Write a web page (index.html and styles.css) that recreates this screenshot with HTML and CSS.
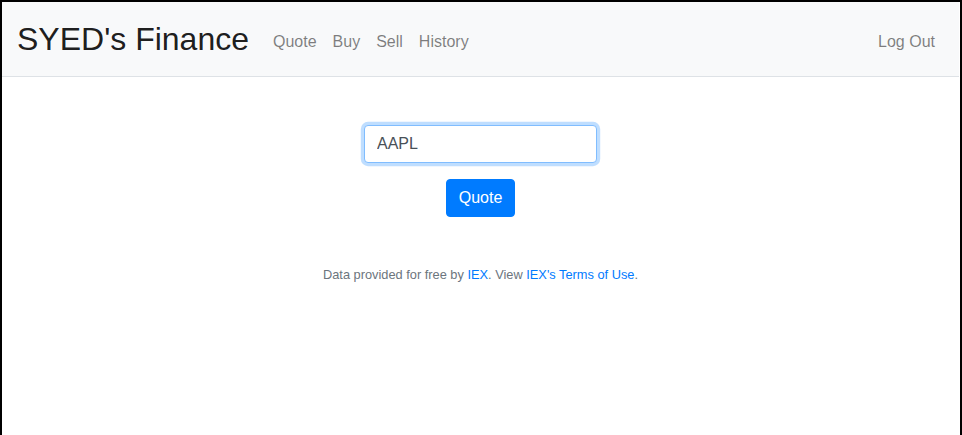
FILE: index.html
```html
<!DOCTYPE html>
<html lang="en">
<head>
<meta charset="utf-8">
<title>SYED's Finance: Quote</title>
<link rel="stylesheet" href="styles.css">
</head>
<body>
<div class="frame">
  <nav class="navbar">
    <a class="brand" href="#">SYED's Finance</a>
    <ul class="nav">
      <li><a class="nav-link" href="#">Quote</a></li>
      <li><a class="nav-link" href="#">Buy</a></li>
      <li><a class="nav-link" href="#">Sell</a></li>
      <li><a class="nav-link" href="#">History</a></li>
    </ul>
    <ul class="nav nav-right">
      <li><a class="nav-link" href="#">Log Out</a></li>
    </ul>
  </nav>
  <main class="main">
    <form class="quote-form">
      <div class="form-group">
        <input class="form-control" type="text" name="symbol" placeholder="Symbol" value="AAPL" autocomplete="off">
      </div>
      <button class="btn" type="button">Quote</button>
    </form>
  </main>
  <footer class="footer">
    Data provided for free by <a href="#">IEX</a>. View <a href="#">IEX's Terms of Use</a>.
  </footer>
</div>
</body>
</html>
```
FILE: styles.css
```css
* { box-sizing: border-box; }
html, body { margin: 0; padding: 0; background: #fff; }
body {
  font-family: "Liberation Sans", Arial, sans-serif;
  font-size: 16px;
  line-height: 1.5;
  color: #212529;
}
.frame {
  border: 2px solid #000;
  border-bottom: none;
  padding-right: 1px;
  min-height: 435px;
}
.navbar {
  display: flex;
  align-items: center;
  background: #f8f9fa;
  border-bottom: 1px solid #dee2e6;
  padding: 8px 16px 8px 15px;
}
.brand {
  font-size: 32px;
  line-height: 48px;
  padding: 5px 0;
  margin-right: 16px;
  color: rgba(0,0,0,.9);
  text-decoration: none;
}
.nav {
  display: flex;
  list-style: none;
  margin: 6px 0 0;
  padding: 0;
}
.nav-right { margin-left: auto; }
.nav-link {
  display: block;
  padding: 8px;
  color: rgba(0,0,0,.5);
  text-decoration: none;
}
.main {
  padding: 48px;
  text-align: center;
}
.form-group { margin-bottom: 16px; }
.form-control {
  display: inline-block;
  width: 233px;
  height: 38px;
  padding: 6px 12px;
  font-family: inherit;
  font-size: 16px;
  line-height: 1.5;
  color: #495057;
  background: #fff;
  border: 1px solid #80bdff;
  border-radius: 4px;
  box-shadow: 0 0 0 3.2px rgba(0,123,255,.25);
  outline: none;
}
.btn {
  display: inline-block;
  height: 38px;
  padding: 6px 12px;
  font-family: inherit;
  font-size: 16px;
  line-height: 1.5;
  color: #fff;
  background: #007bff;
  border: 1px solid #007bff;
  border-radius: 4px;
}
.footer {
  font-size: 12.8px;
  text-align: center;
  color: #6c757d;
}
.footer a { color: #007bff; text-decoration: none; }
```
